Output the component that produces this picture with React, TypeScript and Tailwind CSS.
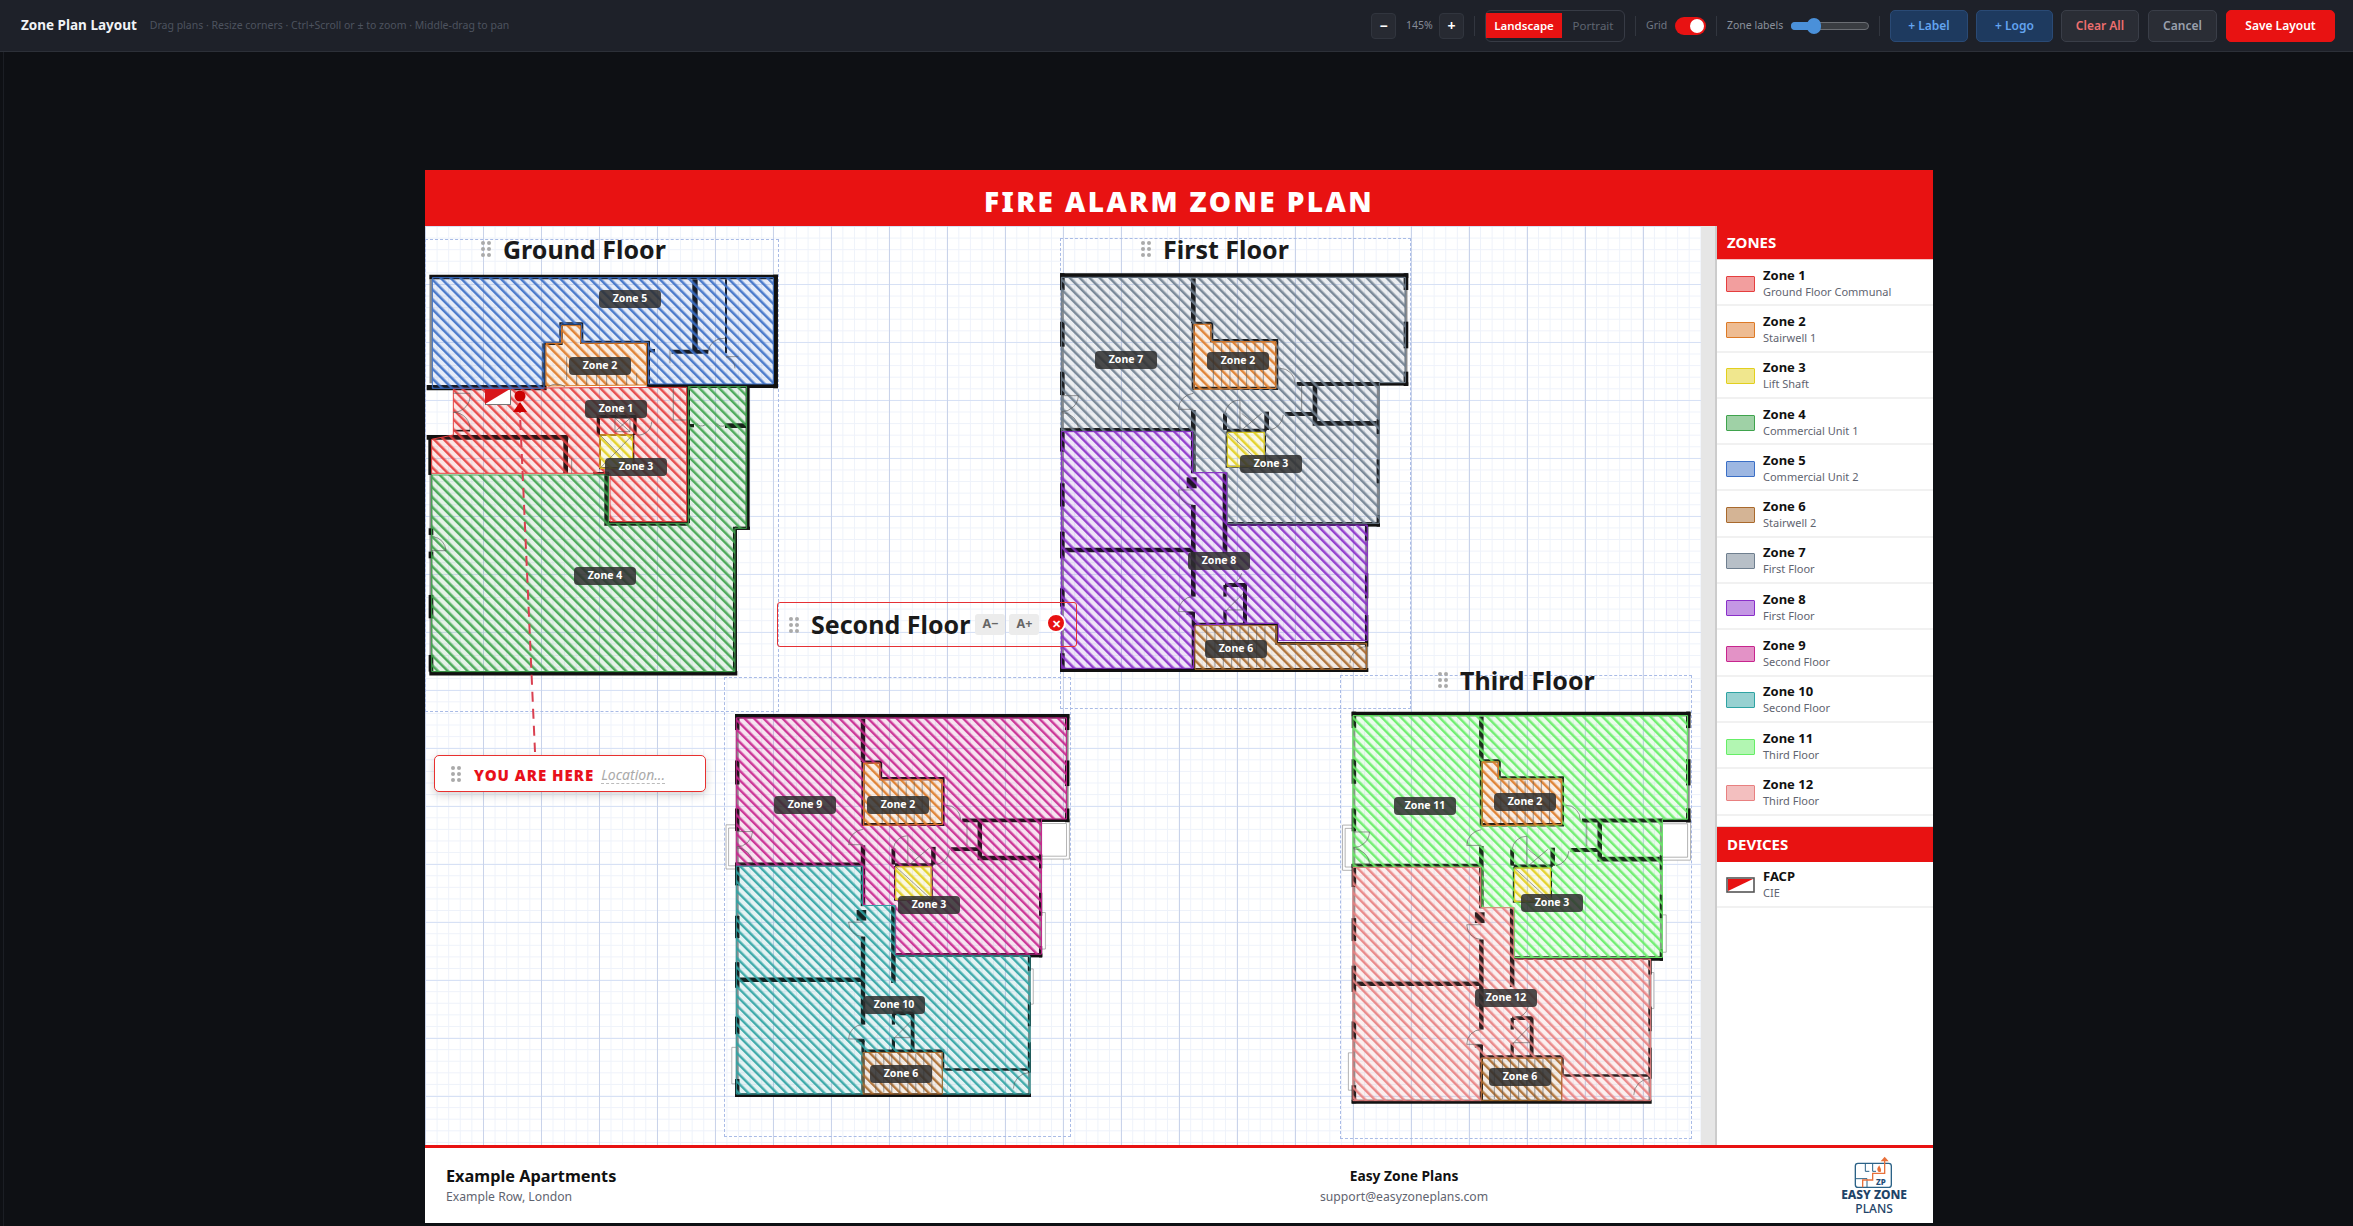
import type { ReactNode } from 'react';

type Wall = [string, number];

interface ZoneShape {
  color: string;
  rings: string[];
}

const ZONES = [
  { name: 'Zone 1', sub: 'Ground Floor Communal', color: '#e53e3e' },
  { name: 'Zone 2', sub: 'Stairwell 1', color: '#dd7a26' },
  { name: 'Zone 3', sub: 'Lift Shaft', color: '#e2cf1e' },
  { name: 'Zone 4', sub: 'Commercial Unit 1', color: '#3fa34d' },
  { name: 'Zone 5', sub: 'Commercial Unit 2', color: '#3b6fc6' },
  { name: 'Zone 6', sub: 'Stairwell 2', color: '#a9692c' },
  { name: 'Zone 7', sub: 'First Floor', color: '#6f7f8f' },
  { name: 'Zone 8', sub: 'First Floor', color: '#8a2fc9' },
  { name: 'Zone 9', sub: 'Second Floor', color: '#c7258e' },
  { name: 'Zone 10', sub: 'Second Floor', color: '#2fa3a3' },
  { name: 'Zone 11', sub: 'Third Floor', color: '#66ee66' },
  { name: 'Zone 12', sub: 'Third Floor', color: '#e88080' },
];

const zoneColor = (n: number) => ZONES[n - 1].color;

// ground floor drawing, coordinates are 3x page px from (420,160)
const GROUND_WALLS: Wall[] = [
  ['28,351 1074,351', 14],
  ['1067,344 1067,685', 14],
  ['20,683 380,683', 16],
  ['685,678 1074,678', 12],
  ['372,550 372,685', 10],
  ['372,550 423,550 423,492 485,492 485,547 685,547 685,680', 10],
  ['825,358 825,580', 16],
  ['755,575 865,575', 12],
  ['690,572 705,572', 10],
  ['918,358 918,580', 6],
  ['805,680 805,1090', 10],
  ['983,680 983,1105', 12],
  ['915,797 980,797', 14],
  ['805,797 822,797', 10],
  ['20,832 445,832', 14],
  ['30,825 30,945', 10],
  ['437,830 437,940', 14],
  ['520,940 560,940', 8],
  ['560,935 560,1090 805,1090', 14],
  ['945,1105 990,1105', 10],
  ['945,1100 945,1545', 12],
  ['28,1540 952,1540', 14],
  ['33,1105 33,1125', 14],
  ['33,1175 33,1195', 14],
  ['33,1305 33,1375', 14],
  ['33,1485 33,1535', 14],
  ['535,825 535,770 645,770 645,825', 10],
  ['535,825 640,825 640,925 540,925 540,825', 6],
  ['100,812 150,812', 5],
];

const GROUND_OUTLINE = ['M33 358 L33 670', 'M33 945 L33 1540'];

const GROUND_THIN = [
  'M100 700 L150 700 A50 50 0 0 1 100 757',
  'M100 757 A50 50 0 0 1 150 812',
  'M40 1130 A45 45 0 0 1 78 1172 L35 1172',
  'M865 575 A45 45 0 0 1 915 535',
  'M945 625 A35 35 0 0 0 918 590 M918 590 L955 590',
  'M750 570 L750 610',
  'M585 775 L630 815 M630 775 L585 815 M585 775 L630 775 L630 815 L585 815 Z',
  'M540 825 L638 925 M638 825 L540 925',
  'M695 785 A40 40 0 0 1 650 825',
  'M760 685 L760 780 L800 780',
  'M455 895 L455 940',
  'M830 790 A20 20 0 0 0 855 795 M890 790 A20 20 0 0 0 915 797',
  'M440 590 L440 660 M470 640 L470 675 M500 640 L500 675 M530 640 L530 675 M560 640 L560 675 M590 640 L590 675 M620 640 L620 675 M650 640 L650 675',
  'M385 680 A45 45 0 0 1 435 680',
];

const GROUND_ZONES: ZoneShape[] = [
  { color: zoneColor(4), rings: ['805,680 980,680 980,1105 945,1105 945,1535 35,1535 35,945 565,945 565,1090 805,1090'] },
  { color: zoneColor(1), rings: ['100,685 800,682 800,1085 570,1085 570,940 35,940 35,838 100,825', '540,825 638,825 638,925 540,925'] },
  { color: zoneColor(5), rings: ['37,353 1060,353 1060,672 685,672 685,547 485,547 485,492 423,492 423,547 372,547 372,685 37,685'] },
  { color: zoneColor(2), rings: ['425,497 482,497 482,550 680,550 680,675 378,678 378,550 425,550'] },
  { color: zoneColor(3), rings: ['540,825 638,825 638,925 540,925'] },
];

// upper floors share one layout, coordinates are 3x page px from (1050,230) on the first floor
const UPPER_WALLS: Wall[] = [
  ['30,137 1075,137', 14],
  ['1068,130 1068,180', 14],
  ['1068,275 1068,355', 14],
  ['1068,425 1068,468', 14],
  ['985,462 1075,462', 10],
  ['985,568 985,612', 10],
  ['985,688 985,760', 10],
  ['985,855 985,890', 10],
  ['950,885 990,885', 10],
  ['950,885 950,932', 10],
  ['950,1030 950,1105', 10],
  ['950,1155 950,1250', 10],
  ['30,1320 955,1320', 12],
  ['37,130 37,180', 14],
  ['37,275 37,350', 14],
  ['37,425 37,495', 14],
  ['37,595 37,665', 14],
  ['37,760 37,830', 14],
  ['37,905 37,985', 14],
  ['37,1075 37,1130', 14],
  ['37,1270 37,1325', 14],
  ['430,145 430,280', 14],
  ['430,280 485,280 485,332 680,332 680,475 430,475 430,280', 10],
  ['30,600 430,600', 12],
  ['430,540 430,730', 14],
  ['425,742 425,775', 30],
  ['430,825 430,1100', 14],
  ['45,960 430,960', 14],
  ['525,730 525,970', 14],
  ['525,882 990,882', 12],
  ['530,605 645,605 645,710 530,710 530,605', 6],
  ['525,550 525,600', 12],
  ['650,545 650,600', 14],
  ['530,600 650,600', 8],
  ['740,462 990,462', 12],
  ['795,465 795,580 980,580', 14],
  ['705,552 795,552', 12],
  ['525,1065 585,1065 585,1180', 12],
  ['525,1065 525,1100', 10],
  ['525,1140 525,1180', 10],
  ['435,1182 680,1182 680,1240 950,1240', 8],
  ['410,1150 435,1150', 10],
  ['430,1150 430,1318', 10],
];

const UPPER_OUTLINE = ['M37 130 L37 1325', 'M1068 130 L1068 465', 'M985 462 L985 885', 'M950 885 L950 1325'];

const UPPER_THIN = [
  'M35 497 L85 497 A50 50 0 0 1 35 545',
  'M85 595 A50 50 0 0 0 35 548 M35 595 L85 595',
  'M385 538 L430 538 M385 538 A50 50 0 0 1 430 490',
  'M525 550 A45 45 0 0 1 570 510 L570 600',
  'M700 555 A50 50 0 0 1 660 600',
  'M690 415 A45 45 0 0 1 735 460',
  'M385 780 L430 780 M385 780 A45 45 0 0 0 430 825',
  'M385 1145 L430 1145 M385 1145 A45 45 0 0 1 430 1100',
  'M530 1065 A45 45 0 0 0 575 1030',
  'M900 1300 A50 50 0 0 1 950 1250',
  'M755 465 L755 540',
  'M575 550 L635 600 M635 550 L575 600',
  'M530 605 L645 710',
  'M530 1090 L580 1140 M580 1090 L530 1140 M530 1140 L580 1140',
  'M490 340 L490 470 M515 340 L515 470 M540 340 L540 470 M565 340 L565 470 M590 340 L590 470 M615 340 L615 470 M640 340 L640 470',
  'M470 1190 L470 1312 M495 1190 L495 1312 M520 1190 L520 1312 M545 1190 L545 1312 M570 1190 L570 1312 M595 1190 L595 1312 M620 1190 L620 1312 M645 1190 L645 1312',
];

// window frames that stick out of the outer wall on the second and third floor
const UPPER_FRAMES = [
  'M988 463 L1075 463 L1075 583 L988 583 M988 472 L1066 472 L1066 574 L988 574',
  'M35 476 L2 476 L2 614 L35 614 M35 486 L10 486 L10 604 L35 604',
  'M988 750 L1000 750 L1000 864 L988 864',
  'M946 926 L962 926 L962 1036 L946 1036',
  'M35 1171 L20 1171 L20 1285 L35 1285',
];

const STAIR_TOP = '432,283 483,283 483,335 678,335 678,475 432,478';
const LIFT = '532,607 643,607 643,710 532,710';
const STAIR_BOTTOM_L = '435,1187 680,1187 680,1240 950,1240 950,1318 435,1318';
const STAIR_BOTTOM = '430,1187 678,1187 678,1317 430,1317';

function upperZones(top: string, bottom: string, stairL: boolean): ZoneShape[] {
  return [
    {
      color: top,
      rings: ['34,142 1066,142 1066,458 988,458 988,880 532,880 532,728 432,728 432,604 34,604', STAIR_TOP, LIFT],
    },
    {
      color: bottom,
      rings: stairL
        ? ['34,605 428,605 428,728 530,728 530,885 952,885 952,1232 685,1232 685,1180 435,1185 430,1315 34,1315']
        : ['34,605 428,605 428,728 530,728 530,885 952,885 952,1317 678,1317 678,1187 430,1187 430,1317 34,1317'],
    },
    { color: zoneColor(2), rings: [STAIR_TOP] },
    { color: zoneColor(3), rings: [LIFT] },
    { color: zoneColor(6), rings: [stairL ? STAIR_BOTTOM_L : STAIR_BOTTOM] },
  ];
}

const ringsToPath = (rings: string[]) =>
  rings.map(r => 'M' + r.replace(/ /g, ' L') + ' Z').join(' ');

function Hatches() {
  return (
    <defs>
      {ZONES.map((z, i) => (
        <pattern
          key={z.name}
          id={`hatch-${z.color.slice(1)}-${i}`}
          width="21"
          height="21"
          patternUnits="userSpaceOnUse"
          patternTransform="rotate(-45)"
        >
          <rect width="7.5" height="21" fill={z.color} />
        </pattern>
      ))}
    </defs>
  );
}

function hatchUrl(color: string) {
  const i = ZONES.findIndex(z => z.color === color);
  return `url(#hatch-${color.slice(1)}-${i})`;
}

function Zone({ shape }: { shape: ZoneShape }) {
  const d = ringsToPath(shape.rings);
  return (
    <g>
      <path d={d} fill={shape.color} fillOpacity={0.13} fillRule="evenodd" />
      <path d={d} fill={hatchUrl(shape.color)} fillOpacity={0.9} fillRule="evenodd" />
      <path d={d} fill="none" stroke={shape.color} strokeWidth={3} />
    </g>
  );
}

function Grip() {
  return (
    <div className="grid w-[10px] grid-cols-2 gap-[2px]">
      {[0, 1, 2, 3, 4, 5].map(i => (
        <span key={i} className="size-[4px] rounded-full bg-[#aaaaaa]" />
      ))}
    </div>
  );
}

function ZoneLabel({ text, x, y }: { text: string; x: number; y: number }) {
  return (
    <div
      className="absolute flex h-[18px] w-[62px] items-center justify-center rounded-[4px] bg-[#2e2e2e]/85 text-[10.5px] font-bold text-white"
      style={{ left: x - 31, top: y - 9 }}
    >
      {text}
    </div>
  );
}

interface PlanProps {
  box: [number, number, number, number];
  transform: string;
  walls: Wall[];
  outline: string[];
  thin: string[];
  zones: ZoneShape[];
  frames?: string[];
  labels: [string, number, number][];
  extra?: ReactNode;
  children?: ReactNode;
}

// box and labels are given in page px, the canvas starts at (425,226)
function Plan({ box, transform, walls, outline, thin, zones, frames, labels, extra, children }: PlanProps) {
  const [x, y, w, h] = box;
  return (
    <div
      className="absolute border border-dashed border-[#a9bbe6]"
      style={{ left: x - 425, top: y - 226, width: w, height: h }}
    >
      <svg
        className="absolute left-[-1px] top-[-1px] overflow-visible"
        width={w}
        height={h}
        viewBox={`${x} ${y} ${w} ${h}`}
      >
        <Hatches />
        <g transform={transform}>
          {frames?.map(d => <path key={d} d={d} fill="#ffffff" stroke="#8a8a8a" strokeWidth={2} />)}
          {outline.map(d => <path key={d} d={d} fill="none" stroke="#8c8c8c" strokeWidth={9} />)}
          {walls.map(([pts, sw]) => (
            <polyline key={pts} points={pts} fill="none" stroke="#111111" strokeWidth={sw} />
          ))}
          {zones.map((z, i) => <Zone key={i} shape={z} />)}
          {thin.map(d => <path key={d} d={d} fill="none" stroke="#555555" strokeWidth={1.8} />)}
        </g>
        {extra}
      </svg>
      {labels.map(([text, lx, ly], i) => (
        <ZoneLabel key={i} text={text} x={lx - x - 1} y={ly - y - 1} />
      ))}
      {children}
    </div>
  );
}

function PlanTitle({ left, top, text }: { left: number; top: number; text: string }) {
  return (
    <div className="absolute flex items-center gap-[12px]" style={{ left, top }}>
      <Grip />
      <span className="text-[25px] leading-[30px] font-bold whitespace-nowrap text-[#1a1a1a]">{text}</span>
    </div>
  );
}

function FacpMark() {
  return (
    <g>
      <rect x="485.5" y="389.5" width="25" height="15" fill="#ffffff" stroke="#777777" strokeWidth="1" />
      <polygon points="485,389 510,389 485,404" fill="#d8161c" />
      <line x1="519.5" y1="403" x2="535" y2="752" stroke="#d94050" strokeWidth="2" strokeDasharray="10 7" />
      <circle cx="520" cy="396" r="5.5" fill="#cc0000" />
      <polygon points="520,402 527,412 513,412" fill="#cc0000" />
    </g>
  );
}

function Legend() {
  return (
    <aside className="flex w-[216px] shrink-0 flex-col bg-white">
      <div className="flex h-[34px] shrink-0 items-center border-b border-[#f4c8c8] bg-[#e81212] pl-[10px] text-[15px] font-bold text-white">
        ZONES
      </div>
      {ZONES.map(z => (
        <LegendRow key={z.name} name={z.name} sub={z.sub}>
          <div className="relative h-[16px] w-[29px] rounded-[1px] border-[1.5px]" style={{ borderColor: z.color }}>
            <div className="absolute inset-0 opacity-50" style={{ backgroundColor: z.color }} />
          </div>
        </LegendRow>
      ))}
      <div className="mt-[10px] flex h-[36px] shrink-0 items-center border-t border-[#dddddd] bg-[#e81212] pl-[10px] text-[15px] font-bold text-white">
        DEVICES
      </div>
      <LegendRow name="FACP" sub="CIE">
        <svg width="29" height="16" viewBox="0 0 29 16">
          <rect x="1" y="1" width="27" height="14" fill="#ffffff" stroke="#555555" strokeWidth="1.6" />
          <polygon points="2,2 27,2 2,14" fill="#e81212" />
        </svg>
      </LegendRow>
    </aside>
  );
}

function LegendRow({ name, sub, children }: { name: string; sub: string; children: ReactNode }) {
  return (
    <div className="flex h-[46.3px] shrink-0 items-center gap-[8px] border-b-2 border-[#f1f1f1] pt-[3px] pl-[9px]">
      {children}
      <div>
        <p className="text-[13px] leading-[16px] font-bold text-[#111111]">{name}</p>
        <p className="text-[11px] leading-[18px] text-[#5f6470]">{sub}</p>
      </div>
    </div>
  );
}

function ZpLogo() {
  return (
    <div className="flex flex-col items-center">
      <svg width="44" height="32" viewBox="160 52 132 96">
        <rect x="170" y="74" width="108" height="72" rx="8" fill="none" stroke="#2b6287" strokeWidth="4" />
        <path d="M200 74 L200 98 L212 98 M222 74 L222 98 L232 98 M170 120 L205 120 L205 146" fill="none" stroke="#2b6287" strokeWidth="3" />
        <path d="M192 146 L192 124 L222 124 L222 104 L258 104 L258 64" fill="none" stroke="#e8703a" strokeWidth="4" />
        <polygon points="258,54 270,68 246,68" fill="#e8703a" />
        <path d="M240 100 C232 92 238 86 242 80 C244 88 250 92 246 100 Z" fill="#e8703a" />
        <text x="232" y="138" fontSize="24" fontWeight="800" fill="#1f4e79">ZP</text>
      </svg>
      <span className="text-[12px] leading-[14px] font-extrabold whitespace-nowrap text-[#1f4468]">EASY ZONE</span>
      <span className="text-[12px] leading-[14px] font-medium text-[#1f4468]">PLANS</span>
    </div>
  );
}

function ToolButton({ label, className }: { label: string; className: string }) {
  return (
    <button className={`flex h-[32px] items-center justify-center rounded-[5px] border text-[12px] font-semibold ${className}`}>
      {label}
    </button>
  );
}

function Divider() {
  return <div className="h-[20px] w-px bg-[#32363f]" />;
}

function Toolbar() {
  return (
    <header className="flex h-[52px] shrink-0 items-center justify-between border-b border-[#2c3038] bg-[#1e2129] pr-[18px] pl-[21px]">
      <div className="flex items-center gap-[13px]">
        <span className="text-[13.5px] font-bold text-[#f1f3f6]">Zone Plan Layout</span>
        <span className="text-[10.5px] text-[#4d535f]">Drag plans · Resize corners · Ctrl+Scroll or ± to zoom · Middle-drag to pan</span>
      </div>
      <div className="flex items-center gap-[10px]">
        <div className="flex items-center gap-[8px]">
          <button className="flex h-[26px] w-[25px] items-center justify-center rounded-[4px] border border-[#31353e] bg-[#272a32] text-[14px] font-bold text-white">−</button>
          <span className="ml-[2px] w-[25px] text-center text-[10.5px] text-[#858b97]">145%</span>
          <button className="flex h-[26px] w-[25px] items-center justify-center rounded-[4px] border border-[#31353e] bg-[#272a32] text-[14px] font-bold text-white">+</button>
        </div>
        <Divider />
        <div className="flex h-[32px] w-[140px] items-center rounded-[6px] border border-[#373b45]">
          <div className="flex h-[25px] w-[76px] items-center justify-center bg-[#e81212] text-[11.5px] font-semibold text-white">Landscape</div>
          <div className="flex-1 text-center text-[11.5px] text-[#5f6570]">Portrait</div>
        </div>
        <Divider />
        <div className="flex items-center gap-[8px]">
          <span className="w-[21px] text-[10.5px] text-[#717784]">Grid</span>
          <div className="flex h-[18px] w-[31px] items-center justify-end rounded-full bg-[#e81212] pr-[2px]">
            <span className="size-[14px] rounded-full bg-white" />
          </div>
        </div>
        <Divider />
        <div className="flex items-center gap-[7px]">
          <span className="w-[57px] text-[10.5px] whitespace-nowrap text-[#8b919c]">Zone labels</span>
          <div className="relative h-[8px] w-[78px] rounded-full border border-[#6b6e74] bg-[#3a3d42]">
            <div className="absolute top-[-1px] left-[-1px] h-[8px] w-[24px] rounded-l-full bg-[#4a90d9]" />
            <div className="absolute top-[-5px] left-[15px] h-[16px] w-[14px] rounded-full bg-[#4a90d9]" />
          </div>
        </div>
        <Divider />
        <div className="flex items-center gap-[8px]">
          <ToolButton label="+ Label" className="w-[78px] border-[#2a4a75] bg-[#1e3a5f] text-[#63a4f0]" />
          <ToolButton label="+ Logo" className="w-[77px] border-[#2a4a75] bg-[#1e3a5f] text-[#63a4f0]" />
          <ToolButton label="Clear All" className="w-[78px] border-[#3a3e48] bg-[#2a2d35] text-[#ee6f6f]" />
          <ToolButton label="Cancel" className="ml-px w-[69px] border-[#3a3e48] bg-[#2a2d35] text-[#9aa1ae]" />
          <ToolButton label="Save Layout" className="ml-px w-[109px] border-[#e81212] bg-[#e81212] text-white" />
        </div>
      </div>
    </header>
  );
}

export default function App() {
  return (
    <div className="flex h-screen w-full flex-col overflow-hidden bg-[#0e1014] font-['Noto_Sans',sans-serif]">
      <Toolbar />
      <main className="ml-[3px] flex-1 border-l border-[#1b1e24] pt-[118px] pl-[421px]">
        <div className="flex h-[1053px] w-[1508px] flex-col bg-white">
          <div className="flex h-[56px] shrink-0 items-center justify-center bg-[#e81212] pt-[5px] text-[28px] font-black tracking-[2.4px] text-white">
            FIRE ALARM ZONE PLAN
          </div>
          <div className="flex min-h-0 flex-1">
            <div className="relative flex-1 overflow-hidden bg-[linear-gradient(to_right,#c9d3ea_1px,transparent_1px),linear-gradient(to_bottom,#d7e1f5_1px,transparent_1px),linear-gradient(to_right,#eef2fa_1px,transparent_1px),linear-gradient(to_bottom,#eef2fa_1px,transparent_1px)] bg-[size:58px_58px,58px_58px,11.6px_11.6px,11.6px_11.6px]">
              <Plan
                box={[425, 239, 354, 473]}
                transform="translate(420 160) scale(0.3333)"
                walls={GROUND_WALLS}
                outline={GROUND_OUTLINE}
                thin={GROUND_THIN}
                zones={GROUND_ZONES}
                labels={[
                  ['Zone 5', 630, 299],
                  ['Zone 2', 600, 366],
                  ['Zone 1', 616, 409],
                  ['Zone 3', 636, 467],
                  ['Zone 4', 605, 576],
                ]}
                extra={<FacpMark />}
              >
                <PlanTitle left={55} top={-6} text="Ground Floor" />
              </Plan>
              <Plan
                box={[1060, 238, 351, 471]}
                transform="translate(1050 230) scale(0.3333)"
                walls={UPPER_WALLS}
                outline={UPPER_OUTLINE}
                thin={UPPER_THIN}
                zones={upperZones(zoneColor(7), zoneColor(8), true)}
                labels={[
                  ['Zone 7', 1126, 360],
                  ['Zone 2', 1238, 361],
                  ['Zone 3', 1271, 464],
                  ['Zone 8', 1219, 561],
                  ['Zone 6', 1236, 649],
                ]}
              >
                <PlanTitle left={80} top={-5} text="First Floor" />
              </Plan>
              <Plan
                box={[724, 677, 347, 460]}
                transform="translate(725.4 672.4) scale(0.32 0.3202)"
                walls={UPPER_WALLS}
                outline={UPPER_OUTLINE}
                thin={UPPER_THIN}
                zones={upperZones(zoneColor(9), zoneColor(10), false)}
                frames={UPPER_FRAMES}
                labels={[
                  ['Zone 9', 805, 805],
                  ['Zone 2', 898, 805],
                  ['Zone 3', 929, 905],
                  ['Zone 10', 894, 1005],
                  ['Zone 6', 901, 1074],
                ]}
              />
              <Plan
                box={[1340, 675, 352, 464]}
                transform="translate(1341.9 669.1) scale(0.3243 0.3277)"
                walls={UPPER_WALLS}
                outline={UPPER_OUTLINE}
                thin={UPPER_THIN}
                zones={upperZones(zoneColor(11), zoneColor(12), false)}
                frames={UPPER_FRAMES}
                labels={[
                  ['Zone 11', 1425, 806],
                  ['Zone 2', 1525, 802],
                  ['Zone 3', 1552, 903],
                  ['Zone 12', 1506, 998],
                  ['Zone 6', 1520, 1077],
                ]}
              >
                <PlanTitle left={97} top={-11} text="Third Floor" />
              </Plan>

              {/* selected title, sits over the first floor */}
              <div className="absolute top-[376px] left-[352px] flex h-[45px] w-[300px] items-center rounded-[3px] border-[1.5px] border-[#e53035] pl-[11px]">
                <Grip />
                <span className="ml-[12px] text-[25px] font-bold whitespace-nowrap text-[#1a1a1a]">Second Floor</span>
                <span className="ml-[5px] flex h-[21px] w-[30px] items-center justify-center rounded-[3px] bg-[#ececec] text-[12.5px] font-bold text-[#666666]">A−</span>
                <span className="ml-[4px] flex h-[21px] w-[30px] items-center justify-center rounded-[3px] bg-[#ececec] text-[12.5px] font-bold text-[#666666]">A+</span>
                <span className="absolute top-[10px] right-[10px] flex size-[20px] items-center justify-center rounded-full border-2 border-white bg-[#e81212] text-[11px] leading-none font-black text-white">✕</span>
              </div>

              <div className="absolute top-[529px] left-[9px] flex h-[37px] w-[272px] items-center rounded-[5px] border-[1.5px] border-[#e8302f] bg-white pt-[3px] pl-[16px] shadow-[0_3px_10px_rgba(0,0,0,0.18)]">
                <div className="-mt-[3px]">
                  <Grip />
                </div>
                <span className="ml-[13px] text-[15px] font-black tracking-[1px] whitespace-nowrap text-[#e8101a]">YOU ARE HERE</span>
                <span className="ml-[7px] border-b border-dashed border-[#bbbbbb] text-[14px] leading-[16px] text-[#aaaaaa] italic">Location...</span>
              </div>
            </div>
            <div className="w-[16px] shrink-0 border-r-2 border-[#cccccc] bg-[#e6e6e6]" />
            <Legend />
          </div>
          <footer className="flex h-[78px] shrink-0 items-center border-t-[3px] border-[#e81212] bg-white pr-[26px] pl-[21px]">
            <div className="w-[874px]">
              <p className="text-[16.3px] leading-[22px] font-bold text-[#111111]">Example Apartments</p>
              <p className="text-[12.2px] leading-[20px] text-[#5f6470]">Example Row, London</p>
            </div>
            <div className="w-[168px] text-center">
              <p className="text-[13.8px] leading-[22px] font-bold text-[#111111]">Easy Zone Plans</p>
              <p className="text-[12.2px] leading-[20px] whitespace-nowrap text-[#5f6470]">support@easyzoneplans.com</p>
            </div>
            <div className="ml-auto">
              <ZpLogo />
            </div>
          </footer>
        </div>
      </main>
    </div>
  );
}
